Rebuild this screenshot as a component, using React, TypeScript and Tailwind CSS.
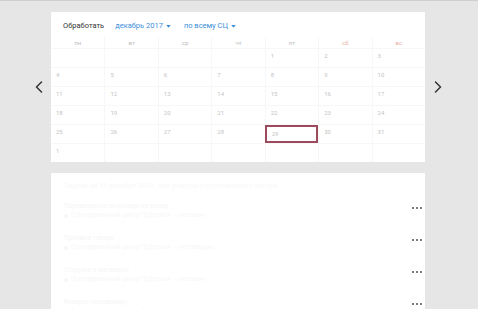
import React from 'react';

const dayNames = ['пн', 'вт', 'ср', 'чт', 'пт', 'сб', 'вс'];

// первая неделя начинается с пятницы
const weeks: (number | null)[][] = [
  [null, null, null, null, 1, 2, 3],
  [4, 5, 6, 7, 8, 9, 10],
  [11, 12, 13, 14, 15, 16, 17],
  [18, 19, 20, 21, 22, 23, 24],
  [25, 26, 27, 28, 29, 30, 31],
  [1, null, null, null, null, null, null],
];

const items = [
  { title: 'Перемещение со склада на склад', sub: 'Сортировочный центр Подольск — магазин' },
  { title: 'Приёмка товара', sub: 'Сортировочный центр Подольск — поставщик' },
  { title: 'Отгрузка в магазины', sub: 'Сортировочный центр Подольск — магазин' },
  { title: 'Возврат поставщику', sub: 'Сортировочный центр Подольск' },
];

function Chevron({ dir }: { dir: 'left' | 'right' }) {
  return (
    <svg width="8" height="12" viewBox="0 0 8 12" fill="none">
      <path
        d={dir === 'left' ? 'M6.5 1L1.5 6l5 5' : 'M1.5 1l5 5-5 5'}
        stroke="#333"
        strokeWidth="1.5"
        strokeLinecap="round"
        strokeLinejoin="round"
      />
    </svg>
  );
}

function Caret() {
  return (
    <svg width="5" height="3" viewBox="0 0 6 4" className="ml-[3px]">
      <path d="M0 0h6L3 3.5z" fill="#3b8fd9" />
    </svg>
  );
}

export default function App() {
  return (
    <div
      className="w-[478px] h-[309px] overflow-hidden bg-[#e6e6e6] border-t border-[#cfcfcf]"
      style={{ fontFamily: 'Roboto, "Noto Sans", sans-serif' }}
    >
      {/* Calendar with arrows */}
      <div className="flex items-center mt-[11px]">
        <div className="w-[51px] flex justify-end pr-[8px]">
          <Chevron dir="left" />
        </div>

        <div className="w-[374px] h-[150px] bg-white flex flex-col">
          {/* Header */}
          <div className="h-[25px] flex items-center pl-[12px] pt-[3px] text-[7.5px]">
            <span className="text-[#333]">Обработать</span>
            <span className="ml-[11px] flex items-center text-[#3b8fd9]">
              декабрь 2017
              <Caret />
            </span>
            <span className="ml-[13px] flex items-center text-[#3b8fd9]">
              по всему СЦ
              <Caret />
            </span>
          </div>

          {/* Day names */}
          <div className="grid grid-cols-7 h-[12px] border-b border-[#f7f7f7]">
            {dayNames.map((d, i) => (
              <div
                key={d}
                className={
                  'flex items-center justify-center text-[6px] border-l border-[#f7f7f7] first:border-l-0 ' +
                  (i >= 5 ? 'text-[#eab1a6]' : 'text-[#bdbdbd]')
                }
              >
                {d}
              </div>
            ))}
          </div>

          {/* Weeks */}
          {weeks.map((w, wi) => (
            <div
              key={wi}
              className="grid grid-cols-7 h-[19px] flex-1 border-b border-[#f7f7f7] last:border-b-0"
            >
              {w.map((n, di) => {
                const today = wi === 4 && di === 4;
                return (
                  <div
                    key={di}
                    className={
                      'text-[6px] text-[#c4c4c4] pl-[5px] pt-[2px] ' +
                      (today
                        ? 'border-2 border-[#9c4a5c] pl-[4px] pt-0'
                        : 'border-l border-[#f7f7f7] first:border-l-0')
                    }
                  >
                    {n ?? ''}
                  </div>
                );
              })}
            </div>
          ))}
        </div>

        <div className="w-[53px] flex pl-[9px]">
          <Chevron dir="right" />
        </div>
      </div>

      <div className="ml-[51px] mt-[11px] w-[374px] h-[200px] bg-white pl-[13px] pr-[3px] pt-[8px]">
        <div className="text-[7px] text-[#f8f8f8] h-[18px]">
          Задачи на 29 декабря 2017 · все участки сортировочного центра
        </div>
        {items.map((it) => (
          <div key={it.title} className="h-[32px] flex items-start justify-between">
            <div className="pt-[3px]">
              <div className="text-[6.5px] text-[#f6f6f6] leading-[9px]">{it.title}</div>
              <div className="text-[6.5px] text-[#f8f8f8] leading-[9px] flex items-center gap-[3px]">
                <span className="w-[4px] h-[4px] rounded-full bg-[#f6f6f6]" />
                {it.sub}
              </div>
            </div>
            <div className="flex gap-[2px] mt-[8px]">
              <span className="w-[2px] h-[2px] bg-[#7a7a7a]" />
              <span className="w-[2px] h-[2px] bg-[#7a7a7a]" />
              <span className="w-[2px] h-[2px] bg-[#7a7a7a]" />
            </div>
          </div>
        ))}
      </div>
    </div>
  );
}
